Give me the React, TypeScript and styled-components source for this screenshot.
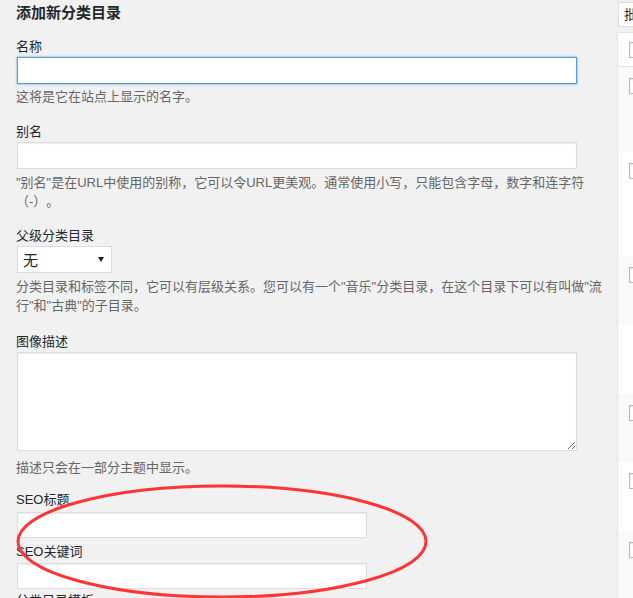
import * as React from 'react';
import styled, { createGlobalStyle } from 'styled-components';

const GlobalStyle = createGlobalStyle`
    html, body {
        margin: 0;
        padding: 0;
        background: #f1f1f1;
    }
    body {
        font-family: "Liberation Sans", "Noto Sans CJK SC", sans-serif;
        font-size: 13px;
        color: #23282d;
        overflow: hidden;
    }
`;

const Page = styled.div`
    position: relative;
    display: flex;
    width: 633px;
    height: 598px;
    overflow: hidden;
`;

const LeftCol = styled.div`
    flex: 0 0 617px;
    box-sizing: border-box;
    padding: 0 11px 0 16px;
`;

const Heading = styled.h2`
    margin: 3px 0 0;
    font-size: 15px;
    line-height: 20px;
    font-weight: 700;
    color: #23282d;
`;

const Field = styled.div<{ $gap: number }>`
    margin-top: ${(p) => p.$gap}px;
`;

const Label = styled.label`
    display: block;
    font-size: 13px;
    line-height: 20px;
    white-space: nowrap;
`;

const TextInput = styled.input<{ $w: number; $h?: number; $top?: number; $focus?: boolean }>`
    display: block;
    box-sizing: border-box;
    width: ${(p) => p.$w}px;
    height: ${(p) => p.$h || 27}px;
    margin: ${(p) => p.$top || 0}px 0 0 1px;
    padding: 3px 5px;
    border: 1px solid ${(p) => (p.$focus ? '#5b9dd9' : '#ddd')};
    box-shadow: ${(p) => (p.$focus ? '0 0 2px rgba(30, 140, 190, 0.8)' : 'inset 0 1px 2px rgba(0, 0, 0, 0.07)')};
    background: #fff;
    font: inherit;
    outline: none;
`;

const TextArea = styled.textarea`
    display: block;
    box-sizing: border-box;
    width: 560px;
    height: 99px;
    margin: 0 0 0 1px;
    padding: 3px 5px;
    border: 1px solid #ddd;
    box-shadow: inset 0 1px 2px rgba(0, 0, 0, 0.07);
    background: #fff;
    font: inherit;
    outline: none;
`;

const SelectBox = styled.div`
    display: flex;
    align-items: center;
    justify-content: space-between;
    box-sizing: border-box;
    width: 95px;
    height: 27px;
    margin-left: 1px;
    padding: 1px 7px 0 5px;
    border: 1px solid #ddd;
    background: #fff;
    font-size: 15px;
    color: #222;
`;

const Hint = styled.p<{ $top: number }>`
    margin: ${(p) => p.$top}px 0 0;
    font-size: 13px;
    line-height: 19.5px;
    color: #666;
    white-space: nowrap;
    text-spacing-trim: space-all;
`;

const RightCol = styled.div`
    flex: 0 0 400px;
    box-sizing: border-box;
    padding-top: 2px;
`;

const BulkBox = styled.div`
    box-sizing: border-box;
    width: 120px;
    height: 25px;
    margin-left: 1px;
    padding-left: 5px;
    border: 1px solid #ddd;
    background: #fff;
    font-size: 13px;
    line-height: 23px;
`;

const Table = styled.div`
    margin-top: 5px;
    border: 1px solid #e5e5e5;
    box-shadow: 0 1px 1px rgba(0, 0, 0, 0.04);
    background: #fff;
`;

const HeadRow = styled.div`
    height: 34px;
    padding: 9px 0 0 11px;
    box-sizing: border-box;
    border-bottom: 1px solid #e1e1e1;
    background: #fff;
`;

const Row = styled.div<{ $h: number; $alt: boolean }>`
    height: ${(p) => p.$h}px;
    padding: 11px 0 0 11px;
    box-sizing: border-box;
    background: ${(p) => (p.$alt ? '#f9f9f9' : '#fff')};
`;

const Check = styled.span`
    display: block;
    width: 16px;
    height: 16px;
    box-sizing: border-box;
    border: 1px solid #b4b9be;
    background: #fff;
    box-shadow: inset 0 1px 2px rgba(0, 0, 0, 0.1);
`;

const Annotation = styled.svg`
    position: absolute;
    left: 0;
    top: 0;
    pointer-events: none;
`;

const rows = [
    { h: 85, check: true },
    { h: 104, check: true },
    { h: 69, check: true },
    { h: 69, check: false },
    { h: 68, check: true },
    { h: 69, check: true },
    { h: 68, check: true },
];

const App: React.FC = () => {
    return (
        <Page>
            <GlobalStyle />
            <LeftCol>
                <Heading>添加新分类目录</Heading>

                <Field $gap={14}>
                    <Label>名称</Label>
                    <TextInput $w={560} $focus />
                    <Hint $top={3}>这将是它在站点上显示的名字。</Hint>
                </Field>

                <Field $gap={15}>
                    <Label>别名</Label>
                    <TextInput $w={560} />
                    <Hint $top={4}>
                        "别名"是在URL中使用的别称，它可以令URL更美观。通常使用小写，只能包含字母，数字和连字符
                        <br />
                        （-）。
                    </Hint>
                </Field>

                <Field $gap={14}>
                    <Label>父级分类目录</Label>
                    <SelectBox>
                        <span>无</span>
                        <svg width="6" height="5" viewBox="0 0 6 5">
                            <path d="M0 0 L6 0 L3 5 Z" fill="#222" />
                        </svg>
                    </SelectBox>
                    <Hint $top={4}>
                        分类目录和标签不同，它可以有层级关系。您可以有一个"音乐"分类目录，在这个目录下可以有叫做"流
                        <br />
                        行"和"古典"的子目录。
                    </Hint>
                </Field>

                <Field $gap={16}>
                    <Label>图像描述</Label>
                    <TextArea />
                    <Hint $top={7}>描述只会在一部分主题中显示。</Hint>
                </Field>

                <Field $gap={13}>
                    <Label>SEO标题</Label>
                    <TextInput $w={350} $h={26} $top={2} />
                </Field>

                <Field $gap={4}>
                    <Label>SEO关键词</Label>
                    <TextInput $w={350} $h={26} $top={1} />
                </Field>

                <Field $gap={2}>
                    <Label>分类目录模板</Label>
                </Field>
            </LeftCol>

            <RightCol>
                <BulkBox>批量操作</BulkBox>
                <Table>
                    <HeadRow>
                        <Check />
                    </HeadRow>
                    {rows.map((r, i) => (
                        <Row key={i + '-term-row'} $h={r.h} $alt={i % 2 === 0}>
                            {r.check && <Check />}
                        </Row>
                    ))}
                </Table>
            </RightCol>

            <Annotation width="633" height="598" viewBox="0 0 633 598">
                <ellipse cx="222" cy="541.5" rx="204" ry="55.5" fill="none" stroke="#ff3434" strokeWidth="3" />
            </Annotation>
        </Page>
    );
};

export default App;
